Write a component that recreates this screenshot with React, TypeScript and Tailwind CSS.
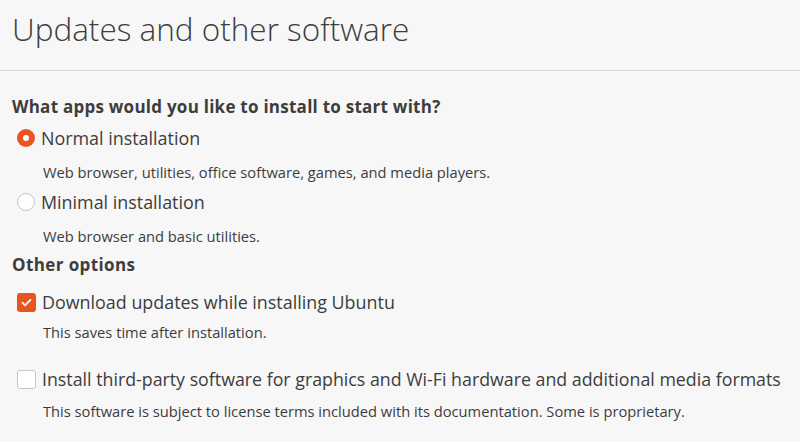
import { useState } from 'react'

type Install = 'normal' | 'minimal'

function Radio({ checked }: { checked: boolean }) {
  return checked ? (
    <span className="flex h-[18px] w-[18px] shrink-0 items-center justify-center rounded-full bg-[#e95420]">
      <span className="h-[6px] w-[6px] rounded-full bg-white" />
    </span>
  ) : (
    <span className="h-[18px] w-[18px] shrink-0 rounded-full border border-[#c6c6c6] bg-white" />
  )
}

function Check({ checked }: { checked: boolean }) {
  return checked ? (
    <span className="flex h-[19px] w-[19px] shrink-0 items-center justify-center rounded-[3px] bg-[#e95420]">
      <svg width="13" height="13" viewBox="0 0 16 16" fill="none">
        <path d="M3 8.2l3.2 3.2L13 4.8" stroke="white" strokeWidth="2.2" strokeLinecap="round" strokeLinejoin="round" />
      </svg>
    </span>
  ) : (
    <span className="h-[19px] w-[19px] shrink-0 rounded-[3px] border border-[#c6c6c6] bg-white" />
  )
}

export default function App() {
  const [install, setInstall] = useState<Install>('normal')
  const [updates, setUpdates] = useState(true)
  const [thirdParty, setThirdParty] = useState(false)

  return (
    <div className="h-[442px] w-[800px] overflow-hidden bg-[#f7f7f7] text-[#3d3d3d] [font-family:'Open_Sans',sans-serif]">
      <div className="flex h-[71px] items-start border-b border-[#dcdcdc] pl-[12px] pt-[8px]">
        <h1 className="text-[31.5px] font-light leading-[42px]">Updates and other software</h1>
      </div>

      <div className="flex flex-col pl-[12px]">
        <div className="mt-[24px] flex h-[24px] items-center text-[17px] font-bold tracking-[0.25px]">
          What apps would you like to install to start with?
        </div>

        <button onClick={() => setInstall('normal')} className="mt-[6px] flex h-[26px] items-center gap-[6px] pl-[5px] text-left text-[17.9px]">
          <Radio checked={install === 'normal'} />
          <span>Normal installation</span>
        </button>
        <div className="mt-[9px] flex h-[24px] items-center pl-[31px] text-[14.7px]">
          Web browser, utilities, office software, games, and media players.
        </div>

        <button onClick={() => setInstall('minimal')} className="mt-[5px] flex h-[26px] items-center gap-[6px] pl-[5px] text-left text-[17.9px]">
          <Radio checked={install === 'minimal'} />
          <span>Minimal installation</span>
        </button>
        <div className="mt-[9px] flex h-[24px] items-center pl-[31px] text-[14.7px]">
          Web browser and basic utilities.
        </div>

        <div className="mt-[5px] flex h-[24px] items-center text-[17px] font-bold tracking-[0.4px]">Other options</div>

        <button onClick={() => setUpdates(!updates)} className="mt-[12px] flex h-[26px] items-center gap-[6px] pl-[5px] text-left text-[17.9px]">
          <Check checked={updates} />
          <span>Download updates while installing Ubuntu</span>
        </button>
        <div className="mt-[5px] flex h-[24px] items-center pl-[31px] text-[14.7px]">
          This saves time after installation.
        </div>

        <button onClick={() => setThirdParty(!thirdParty)} className="mt-[22px] flex h-[26px] items-center gap-[6px] pl-[5px] text-left text-[17.8px]">
          <Check checked={thirdParty} />
          <span>Install third-party software for graphics and Wi-Fi hardware and additional media formats</span>
        </button>
        <div className="mt-[7px] flex h-[24px] items-center pl-[31px] text-[14.7px]">
          This software is subject to license terms included with its documentation. Some is proprietary.
        </div>
      </div>
    </div>
  )
}
